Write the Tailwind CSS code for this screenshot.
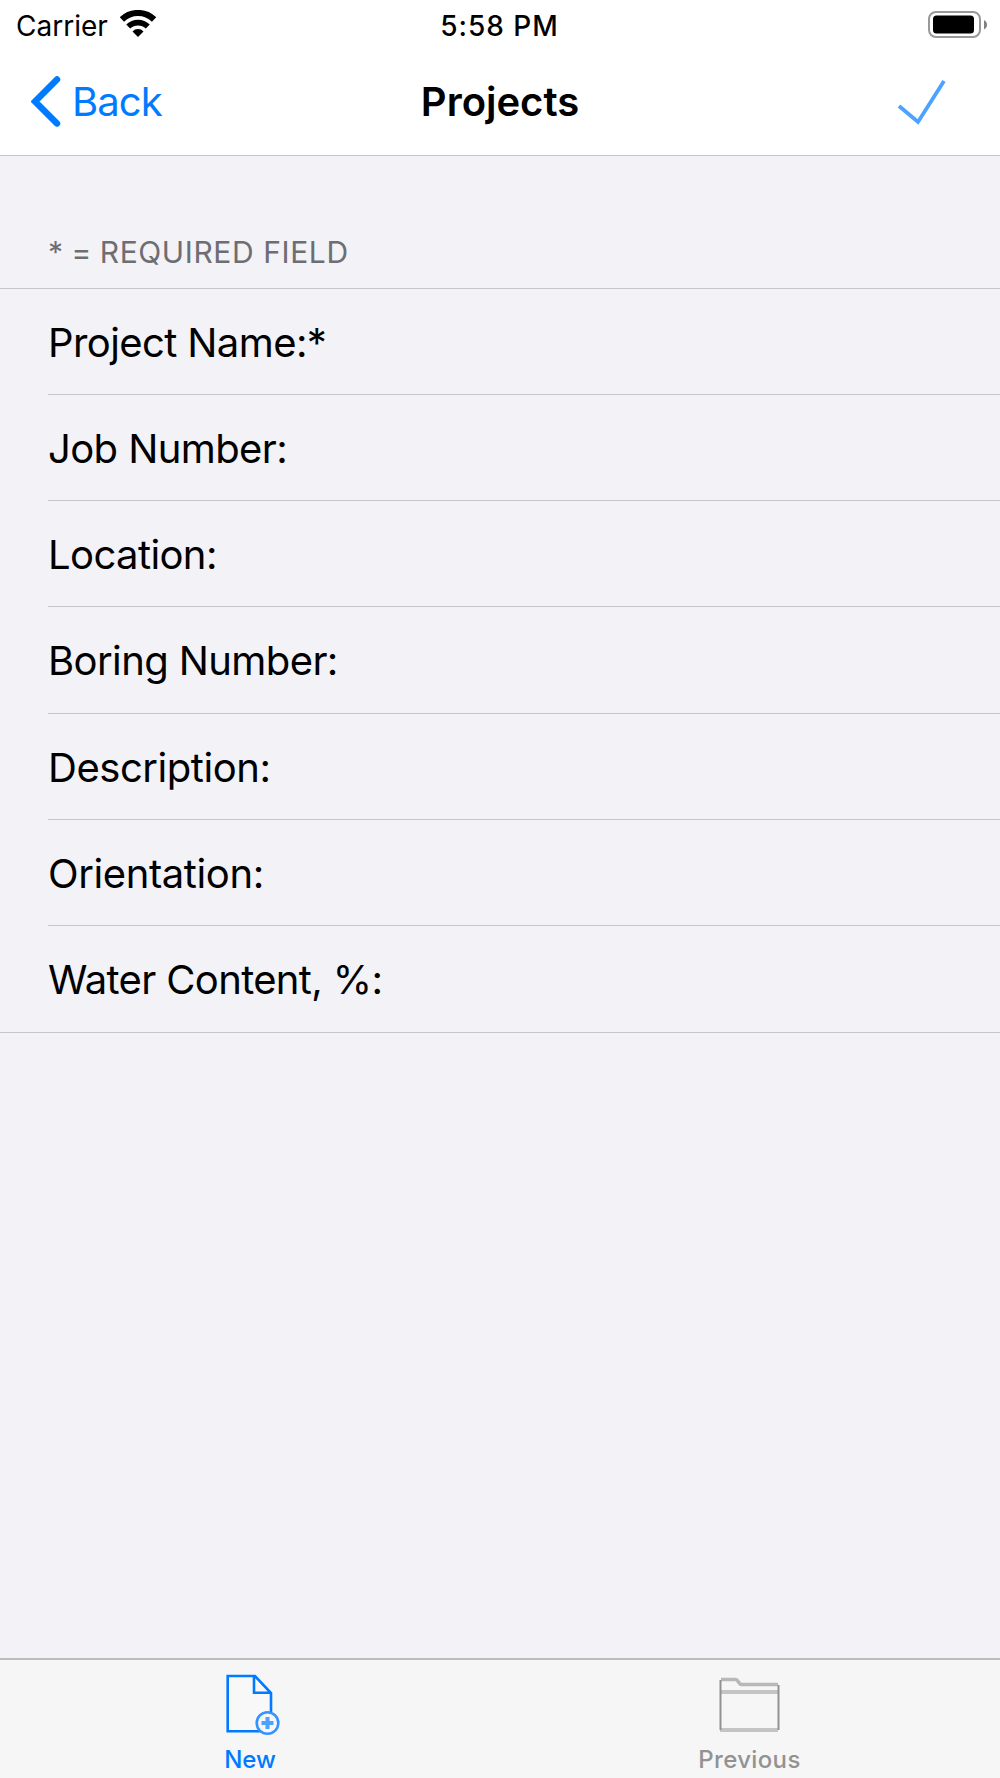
<!DOCTYPE html>
<html lang="en">
<head>
  <meta charset="UTF-8">
  <meta name="viewport" content="width=device-width, initial-scale=1.0">
  <title>Projects</title>
  <script src="https://cdn.jsdelivr.net/npm/@tailwindcss/browser@4"></script>
</head>
<body class="bg-[#f2f2f7] font-['Inter',sans-serif] text-black">
  <div class="flex flex-col w-[1000px] h-[1778px] overflow-hidden">

    <!-- Header -->
    <header class="h-[156px] bg-white border-b border-[#c6c5c9]">
      <!-- Status bar -->
      <div class="grid grid-cols-[1fr_auto_1fr] items-center h-[50px] pl-4 pr-[13px]">
        <div class="flex items-center gap-3">
          <span class="text-[28px] leading-[48px] pt-0.5">Carrier</span>
          <svg class="w-9 h-[27px] -mt-[3px]" viewBox="0 0 36 27" fill="none" stroke="#000">
            <path d="M1.900 9.500a23.200 23.200 0 0 1 32.200 0" stroke-width="6.200"/>
            <path d="M8.200 16.500a14.200 14.200 0 0 1 19.600 0" stroke-width="5.600"/>
            <path d="M18 27l-5.500-5.600a7.700 7.700 0 0 1 11 0z" fill="#000" stroke="none"/>
          </svg>
        </div>
        <div class="-ml-1 pt-0.5 text-[28px] font-medium leading-[48px] tracking-[1px]">5:58 PM</div>
        <div class="flex justify-end -mt-0.5">
          <svg class="w-[59px] h-[27px]" viewBox="0 0 59 27">
            <rect x="1" y="1" width="51" height="25" rx="7" fill="#fff" stroke="#999" stroke-width="2"/>
            <rect x="5" y="4.500" width="41" height="18" rx="3.500"/>
            <path d="M56 9c4 2 4 7.500 0 9.500z" fill="#808080"/>
          </svg>
        </div>
      </div>

      <!-- Navigation bar -->
      <nav class="grid grid-cols-[1fr_auto_1fr] items-center h-[105px] pl-[31px] pr-[54px] -mt-px">
        <button class="flex items-center gap-[11px] text-[#007aff] text-[40px]">
          <svg class="w-[30px] h-[51px]" viewBox="0 0 30 51" fill="none" stroke="currentColor" stroke-width="6.500" stroke-linecap="round">
            <path d="M26 3.500L4 25.500l22 22"/>
          </svg>
          <span class="tracking-[-0.9px]">Back</span>
        </button>
        <h1 class="ml-[23px] text-[40px] font-semibold">Projects</h1>
        <button class="flex justify-end">
          <svg class="w-12 h-[46px]" viewBox="0 0 48 46" fill="none" stroke="#4da2ff" stroke-width="3.800">
            <path d="M1 27l19 16L46 2"/>
          </svg>
        </button>
      </nav>
    </header>

    <!-- Form -->
    <main class="flex-1">
      <h2 class="h-[132px] pt-[78px] pl-12 text-[30px] leading-[37px] text-[#6d6d72]">* = <span class="tracking-[0.6px]">REQUIRED FIELD</span></h2>
      <ul class="border-y border-[#c6c5c9] pl-12 text-[40px] tracking-[-0.6px]">
        <li class="flex items-center h-[106.15px] pt-[3px] border-b border-[#c6c5c9]">Project Name:*</li>
        <li class="flex items-center h-[106.15px] pt-[3px] border-b border-[#c6c5c9]">Job Number:</li>
        <li class="flex items-center h-[106.15px] pt-[3px] border-b border-[#c6c5c9]">Location:</li>
        <li class="flex items-center h-[106.15px] pt-[3px] border-b border-[#c6c5c9]">Boring Number:</li>
        <li class="flex items-center h-[106.15px] pt-[3px] border-b border-[#c6c5c9] tracking-[-0.45px]">Description:</li>
        <li class="flex items-center h-[106.15px] pt-[3px] border-b border-[#c6c5c9] tracking-[-0.4px]">Orientation:</li>
        <li class="flex items-center h-[106px] pt-[3px] tracking-[-0.65px]">Water Content, %:</li>
      </ul>
    </main>

    <!-- Tab bar -->
    <footer class="grid grid-cols-2 h-[120px] bg-[#f6f6f6] border-t-2 border-[#bcbbbf] text-[24px] font-medium leading-[30px]">
      <button class="flex flex-col items-center pt-[14px] text-[#007aff]">
        <svg class="w-[56px] h-[62px] ml-1" viewBox="0 0 56 62" fill="none" stroke="currentColor" stroke-width="2.600">
          <path d="M30 57.300H3.700V2H31l16 17v38.300z" stroke="none" fill="#f8f8f8"/>
          <path d="M38 57.300H3.700V2H31l16 17v19M30 2v16.700h17"/>
          <circle cx="43.500" cy="49" r="10.800" fill="#f6f6f6" stroke="#3393ff"/>
          <path d="M43.500 43v12M37.500 49h12" stroke="#4da2ff" stroke-width="4"/>
        </svg>
        <span class="mt-[9px]">New</span>
      </button>
      <button class="flex flex-col items-center pt-[14px] text-[#929292]">
        <svg class="w-[62px] h-[62px]" viewBox="0 0 62 62" fill="none">
          <path d="M2 5.500h14.500c3 0 3 5 6 5H59" stroke="#b8b8b8" stroke-width="3.500"/>
          <path d="M1 18h58M1 56h58" stroke="#c4c4c4" stroke-width="4"/>
          <path d="M1.500 6v50M59.500 11v45" stroke="#929292" stroke-width="2"/>
        </svg>
        <span class="mt-[9px] -ml-px tracking-[0.35px]">Previous</span>
      </button>
    </footer>

  </div>
</body>
</html>
